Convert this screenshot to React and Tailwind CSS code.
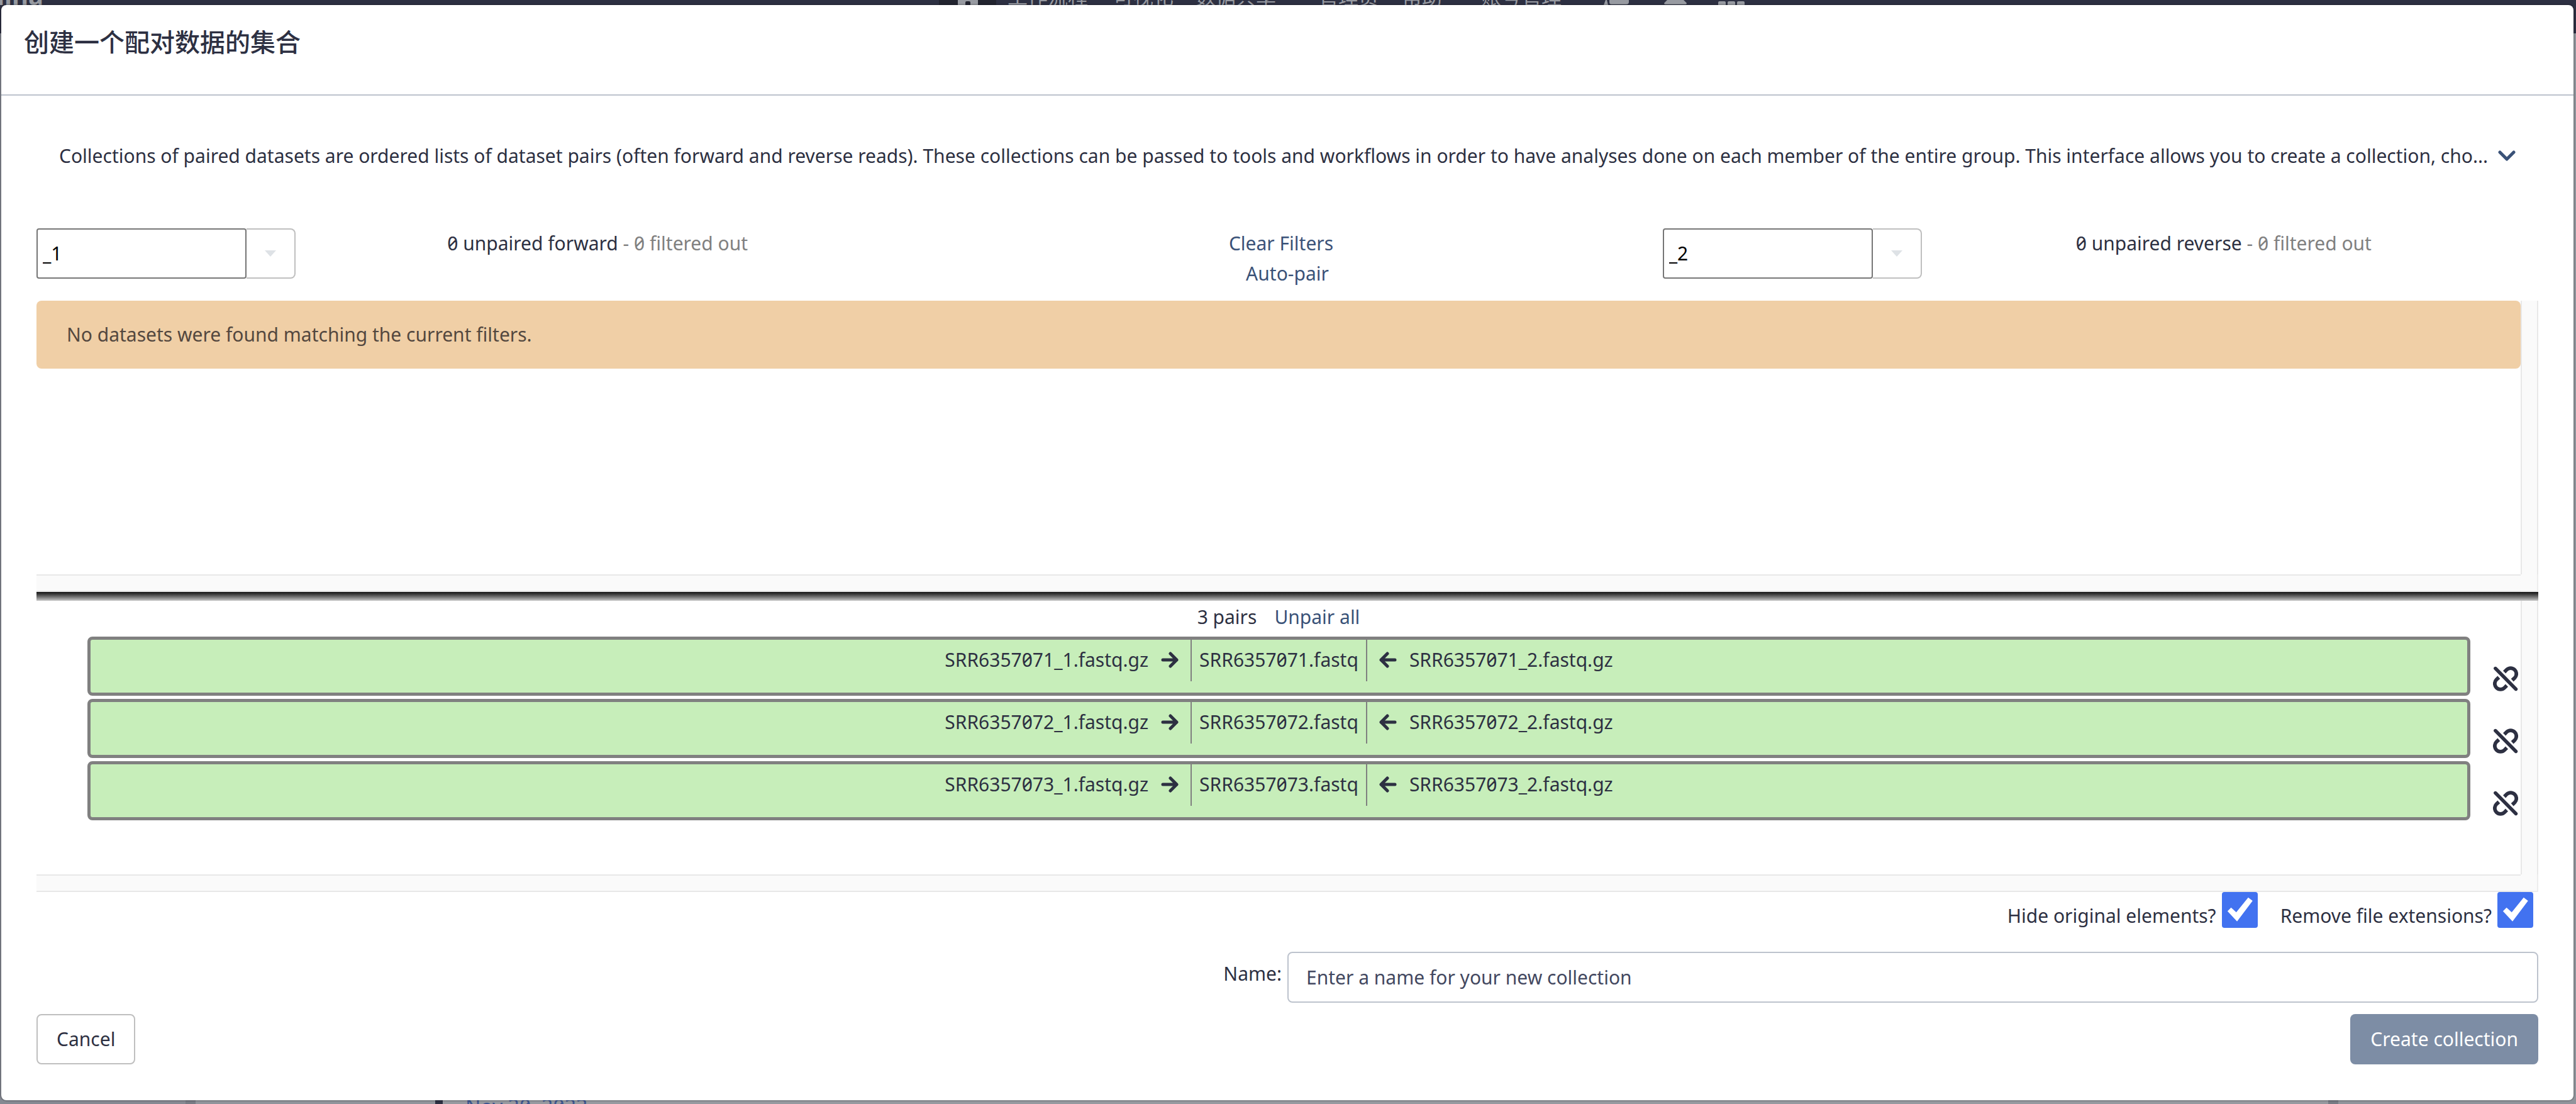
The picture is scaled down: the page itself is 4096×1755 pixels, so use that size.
import React from "react";

const pairs = ["SRR6357071", "SRR6357072", "SRR6357073"];

function ArrowIcon({ left }) {
  return (
    <svg viewBox="0 0 28 28" className={left ? "size-7 rotate-180" : "size-7"} fill="none" stroke="currentColor" strokeWidth="5" strokeLinecap="round" strokeLinejoin="round" aria-hidden="true">
      <path d="M3 14H25M15 4L25 14L15 24" />
    </svg>
  );
}

function UnlinkIcon() {
  return (
    <svg viewBox="0 0 124 124" className="size-10" fill="none" stroke="currentColor" strokeWidth="18" aria-hidden="true">
      <path d="M56 29L67 18A28 28 0 0 1 107 58L95 69" />
      <path d="M29 55L17 66A28 28 0 0 0 57 106L68 95" />
      <path d="M12 11L113 113" strokeWidth="17" strokeLinecap="round" />
    </svg>
  );
}

function Backdrop() {
  return (
    <div aria-hidden="true" className="absolute inset-0 flex flex-col overflow-hidden bg-[#96999f]">
      <div className="flex h-[53px] shrink-0 items-start bg-[#2d3042] text-[32px] leading-8 whitespace-nowrap text-[#979aa1]">
        <div className="-mt-[27px] flex w-[69px] justify-end text-[40px] leading-10 font-bold">Galaxy China</div>
        <div className="ml-[1424px] flex h-full w-[91px] justify-center bg-[#22242f]">
          <svg viewBox="0 0 32 28" className="-mt-[18px] h-7 w-8" fill="currentColor">
            <path d="M16 0L32 14V28H20V22Q20 20 18 20H14Q12 20 12 22V28H0V14Z" />
          </svg>
        </div>
        <div className="-mt-[21px] flex">
          <span className="ml-[18px]">工作流程</span>
          <span className="ml-10">可视化</span>
          <span className="ml-[35px]">数据共享</span>
          <span className="ml-[67px]">管理员</span>
          <span className="ml-[37px]">帮助</span>
          <span className="ml-[62px]">账号管理</span>
        </div>
        <svg viewBox="0 0 40 8" className="ml-[67px] h-2 w-10" fill="currentColor">
          <path d="M3 0H5L7 8H0ZM9 0H40V3Q40 7 36 7H12Q9 7 9 3Z" />
        </svg>
        <svg viewBox="0 0 36 8" className="ml-14 h-2 w-9" fill="currentColor">
          <path d="M5 0H31L36 5Q36 7 34 7H2Q0 7 0 5Z" />
        </svg>
        <svg viewBox="0 0 42 12" className="ml-[50px] h-3 w-[42px]" fill="currentColor">
          <rect y="2" width="12" height="12" rx="2" />
          <rect x="15" y="2" width="12" height="12" rx="2" />
          <rect x="30" y="2" width="12" height="12" rx="2" />
        </svg>
      </div>
      <div className="flex flex-1 items-end">
        <div className="h-full w-[295px] bg-[#858992]" />
        <div className="h-full w-4 bg-[#777b84]" />
        <div className="h-full w-[381px] bg-[#90949b]" />
        <div className="h-full w-3 bg-[#2d3042]" />
        <div className="flex h-3 flex-1 pl-9 text-[32px] leading-8 text-[#3d558f]">Nov 20, 2023</div>
        <div className="h-full w-4 bg-[#777b84]" />
        <div className="h-full w-[378px] bg-[#90949b]" />
      </div>
    </div>
  );
}

function FilterColumn({ id, value, direction }) {
  return (
    <div className="flex w-[35%] items-start">
      <div className="flex h-20">
        <input id={id} aria-label={"Filter " + direction} defaultValue={value} className="w-[334px] rounded-sm border-2 border-[#767676] bg-white px-2 text-[30px] text-black" />
        <button type="button" aria-label={"Choose " + direction + " filter"} className="flex w-[78px] items-center justify-center rounded-r-lg border-2 border-l-0 border-[#bfbfbf]">
          <svg viewBox="0 0 18 10" className="h-2.5 w-[18px]" fill="#dee2e6"><path d="M0 0H18L9 10Z" /></svg>
        </button>
      </div>
      <label htmlFor={id} className="flex-1 pr-5 text-center">
        0 unpaired {direction} <span className="text-[#808080]">- 0 filtered out</span>
      </label>
    </div>
  );
}

function ScrollPane({ children }) {
  return (
    <div className="grid grid-cols-[1fr_28px] grid-rows-[435px_28px]">
      <div>{children}</div>
      <div className="border-x-2 border-[#e8e8e8] bg-[#fafafa]" />
      <div className="border-y-2 border-[#e8e8e8] bg-[#fafafa]" />
      <div className="border-r-2 border-b-2 border-[#ededed] bg-[#fafafa]" />
    </div>
  );
}

function Check({ children }) {
  return (
    <label className="flex items-start gap-[9px]">
      <span className="pt-3.5">{children}</span>
      <span className="relative size-[57px]">
        <input type="checkbox" defaultChecked className="size-full appearance-none rounded-sm bg-[#4272f0]" />
        <svg viewBox="0 0 90 90" className="pointer-events-none absolute inset-0 size-full" fill="white" aria-hidden="true">
          <path d="M14 48L23 39L36 51L66 14L77 22L38 74Z" />
        </svg>
      </span>
    </label>
  );
}

export default function App() {
  return (
    <div className="relative flex min-h-screen flex-col bg-white font-['Noto_Sans','Noto_Sans_CJK_SC',sans-serif] text-[30px] leading-[48px] text-[#2d3042] slashed-zero">
      <Backdrop />
      <div role="dialog" aria-labelledby="title" className="relative mt-1.5 mr-0.5 mb-1 flex flex-1 flex-col rounded-[10px] border-2 border-black/15 bg-white bg-clip-padding">
        <header className="border-b-2 border-[#bdc3cd] px-9 pt-[35px] pb-[59px]">
          <h1 id="title" className="text-[40px] leading-[48px] font-medium">创建一个配对数据的集合</h1>
        </header>
        <main className="px-14 pt-[72px]">
          <div className="flex items-center justify-between pr-9 pl-9">
            <p className="whitespace-nowrap">Collections of paired datasets are ordered lists of dataset pairs (often forward and reverse reads). These collections can be passed to tools and workflows in order to have analyses done on each member of the entire group. This interface allows you to create a collection, cho...</p>
            <button type="button" aria-label="Expand help" className="text-[#3a5278]">
              <svg viewBox="0 0 28 18" className="h-[18px] w-7" fill="none" stroke="currentColor" strokeWidth="5" strokeLinecap="round" strokeLinejoin="round"><path d="M3 3L14 14L25 3" /></svg>
            </button>
          </div>
          <div className="mt-[91px] flex">
            <FilterColumn id="forward" value="_1" direction="forward" />
            <div className="flex w-[30%] flex-col items-center text-[#3a5278]">
              <a href="#clear" className="mr-5">Clear Filters</a>
              <a href="#auto">Auto-pair</a>
            </div>
            <FilterColumn id="reverse" value="_2" direction="reverse" />
          </div>
          <div className="mt-[19px]">
            <ScrollPane>
              <div role="alert" className="rounded-lg bg-[#f0cfa6] px-12 py-[30px] text-[#54483f]">No datasets were found matching the current filters.</div>
            </ScrollPane>
            <div className="h-3.5 bg-linear-to-b from-[#141414] to-[#c8c8c8]" />
            <ScrollPane>
              <div className="flex justify-center gap-7 pt-0.5">
                <span>3 pairs</span>
                <a href="#unpair" className="text-[#3a5278]">Unpair all</a>
              </div>
              <ul className="mt-[7px] flex flex-col gap-[5px] pl-[81px]">
                {pairs.map((name) => (
                  <li key={name} className="flex h-[94px]">
                    <div className="flex flex-1 items-start justify-center rounded-lg border-5 border-[#808080] bg-[#c7eeba]">
                      <span className="flex items-center gap-5 pt-2 pr-[19px]">{name}_1.fastq.gz<ArrowIcon /></span>
                      <span className="h-[66px] border-x-2 border-[#808080] px-3 pt-2">{name}.fastq</span>
                      <span className="flex items-center gap-5 pt-2 pl-[19px]"><ArrowIcon left />{name}_2.fastq.gz</span>
                    </div>
                    <button type="button" aria-label={"Unpair " + name} className="mt-[47px] mr-1 ml-9 self-start"><UnlinkIcon /></button>
                  </li>
                ))}
              </ul>
            </ScrollPane>
          </div>
          <div className="flex h-[62px] justify-end gap-9 pr-2">
            <Check>Hide original elements?</Check>
            <Check>Remove file extensions?</Check>
          </div>
          <div className="mt-[33px] flex items-start justify-end gap-[9px]">
            <label htmlFor="name" className="pt-[11px]">Name:</label>
            <input id="name" placeholder="Enter a name for your new collection" className="h-[81px] w-1/2 rounded-lg border-2 border-[#bdc3cd] bg-white px-7 placeholder:text-[#434860]" />
          </div>
          <footer className="mt-[18px] flex justify-between">
            <button type="button" className="rounded-lg border-2 border-[#bfbfbf] px-[30px] py-3.5">Cancel</button>
            <button type="button" className="rounded-lg bg-[#7d8da5] px-8 py-4 text-white">Create collection</button>
          </footer>
        </main>
      </div>
    </div>
  );
}
